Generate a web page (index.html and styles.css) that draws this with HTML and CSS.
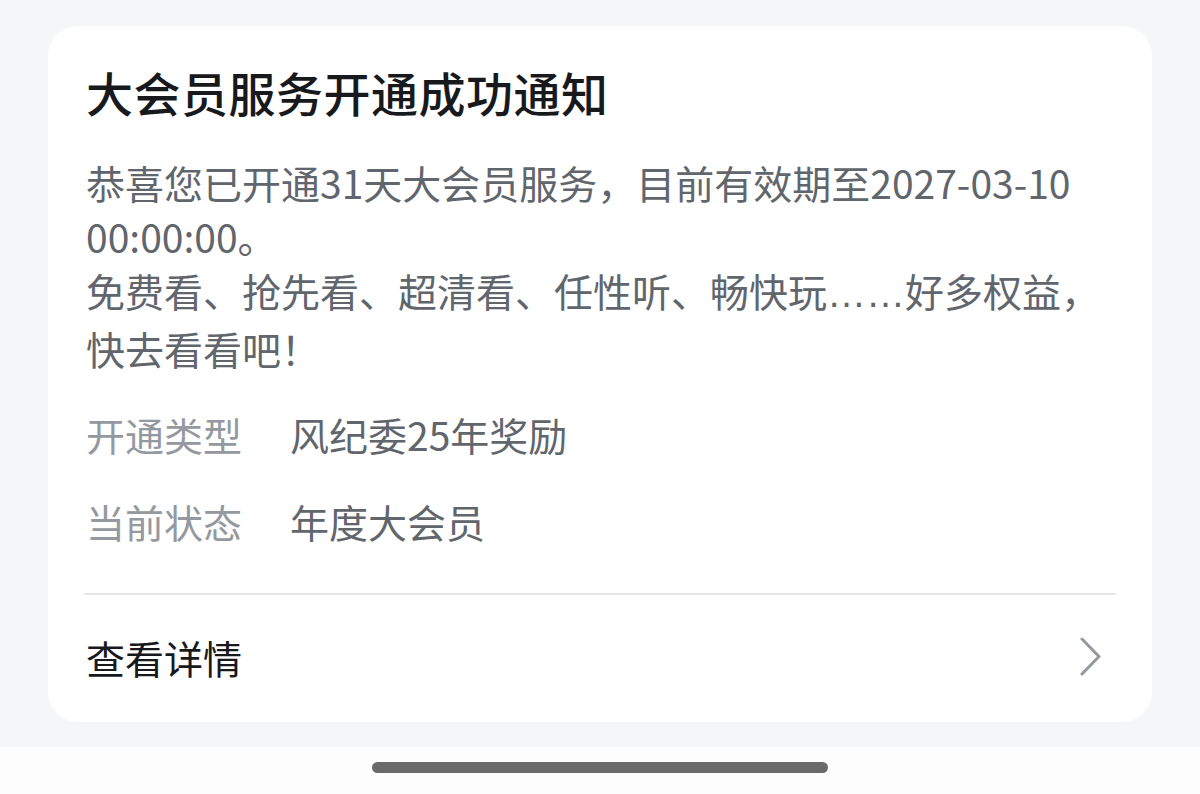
FILE: index.html
```html
<!DOCTYPE html>
<html lang="zh-CN">
<head>
    <meta charset="utf-8">
    <link rel="stylesheet" href="styles.css">
</head>
<body>
    <div class="page">
        <div class="card">
            <div class="card-title">大会员服务开通成功通知</div>
            <div class="card-text">
                恭喜您已开通31天大会员服务，目前有效期至2027-03-10 00:00:00。<br>
                免费看、抢先看、超清看、任性听、畅快玩<span class="dots">……</span>好多权益，快去看看吧！
            </div>
            <div class="info-list">
                <div class="info-row">
                    <span class="info-label">开通类型</span>
                    <span class="info-value">风纪委25年奖励</span>
                </div>
                <div class="info-row">
                    <span class="info-label">当前状态</span>
                    <span class="info-value">年度大会员</span>
                </div>
            </div>
            <div class="card-footer">
                <span>查看详情</span>
                <svg class="arrow" width="22" height="40" viewBox="0 0 22 40">
                    <polyline points="2,2 19,19.5 2,37" fill="none" stroke="#9499a0" stroke-width="3" stroke-linecap="round" stroke-linejoin="round"/>
                </svg>
            </div>
        </div>
    </div>
    <div class="nav-bar">
        <div class="home-indicator"></div>
    </div>
</body>
</html>
```

FILE: styles.css
```css
html, body {
    margin: 0;
    padding: 0;
}

body {
    font-family: "Noto Sans CJK SC", "Noto Sans", sans-serif;
    background-color: #f5f6f8;
    width: 1200px;
    height: 794px;
    overflow: hidden;
}

.page {
    padding: 26px 48px 25px 48px;
}

.card {
    background-color: #fff;
    border-radius: 30px;
    padding: 35px 36px 0 38px;
}

.card-title {
    font-size: 47px;
    line-height: 61px;
    font-weight: 500;
    color: #18191c;
    letter-spacing: 0.5px;
}

.card-text {
    margin-top: 33px;
    font-size: 39px;
    line-height: 54px;
    color: #61666d;
}

.dots {
    font-family: "Liberation Sans", sans-serif;
}

.info-list {
    margin-top: 32px;
    display: flex;
    flex-direction: column;
    gap: 33px;
}

.info-row {
    display: flex;
    font-size: 39px;
    line-height: 54px;
}

.info-label {
    width: 204px;
    color: #9499a0;
}

.info-value {
    color: #61666d;
}

.card-footer {
    margin-top: 45px;
    margin-left: -2px;
    padding-left: 2px;
    padding-bottom: 4px;
    border-top: 2px solid #e3e5e7;
    height: 123px;
    display: flex;
    align-items: center;
    justify-content: space-between;
    font-size: 39px;
    color: #18191c;
}

.arrow {
    margin-right: 14px;
}

.nav-bar {
    background-color: #fdfdfd;
    height: 48px;
    display: flex;
    justify-content: center;
    padding-top: 15px;
    box-sizing: border-box;
}

.home-indicator {
    width: 456px;
    height: 11px;
    border-radius: 6px;
    background-color: #6a6a6a;
}
```
